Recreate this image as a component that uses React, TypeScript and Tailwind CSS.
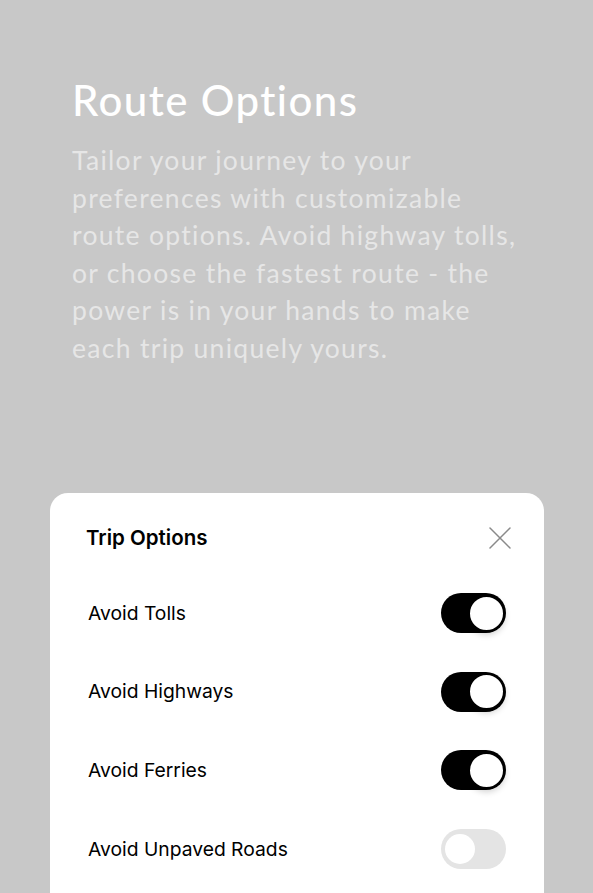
import React from "react";

function Toggle({ on }: { on: boolean }) {
  return on ? (
    <div className="w-[65px] h-[40px] rounded-full bg-black flex items-center justify-end pr-[1px]">
      <div className="w-[37px] h-[37px] rounded-full bg-white border-[2px] border-black shadow-[0_3px_6px_rgba(0,0,0,0.18)]" />
    </div>
  ) : (
    <div className="w-[65px] h-[40px] rounded-full bg-[#e4e4e4] flex items-center justify-start pl-[4px]">
      <div className="w-[30px] h-[30px] rounded-full bg-white" />
    </div>
  );
}

export default function App() {
  const rows = [
    { label: "Avoid Tolls", on: true },
    { label: "Avoid Highways", on: true },
    { label: "Avoid Ferries", on: true },
    { label: "Avoid Unpaved Roads", on: false },
  ];
  const lines = [
    "Tailor your journey to your",
    "preferences with customizable",
    "route options. Avoid highway tolls,",
    "or choose the fastest route - the",
    "power is in your hands to make",
    "each trip uniquely yours.",
  ];
  return (
    <div className="w-[593px] h-[893px] bg-[#c8c8c8] overflow-hidden flex flex-col">
      <div className="pl-[72px] pr-[20px] pt-[74px]" style={{ fontFamily: "Lato, 'Open Sans', sans-serif" }}>
        <h1 className="text-white text-[42px] leading-[52px] font-medium tracking-[1.4px] whitespace-nowrap">Route Options</h1>
        <p className="text-[#e6e6e6] text-[26.5px] leading-[37.6px] mt-[16px] tracking-[1.3px] whitespace-nowrap">
          {lines.map((l, i) => (
            <React.Fragment key={i}>
              {l}
              {i < lines.length - 1 && <br />}
            </React.Fragment>
          ))}
        </p>
      </div>
      <div className="mt-auto ml-[50px] mr-[49px] h-[400px] bg-white rounded-t-[18px] pl-[36px] pr-[38px] pt-[27px]" style={{ fontFamily: "Inter, 'Noto Sans', sans-serif" }}>
        <div className="flex items-center justify-between h-[36px]">
          <span className="text-[20.5px] font-semibold text-black">Trip Options</span>
          <svg width="24" height="24" viewBox="0 0 24 24" className="mr-[-6px]">
            <path d="M2 2 L22 22 M22 2 L2 22" stroke="#8a8a8a" strokeWidth="1.5" strokeLinecap="round" />
          </svg>
        </div>
        <div className="flex flex-col mt-[37px] gap-[38.7px] pl-[2px]">
          {rows.map((r) => (
            <div key={r.label} className="flex items-center justify-between h-[40px]">
              <span className="text-[19.3px] text-black">{r.label}</span>
              <Toggle on={r.on} />
            </div>
          ))}
        </div>
      </div>
    </div>
  );
}
